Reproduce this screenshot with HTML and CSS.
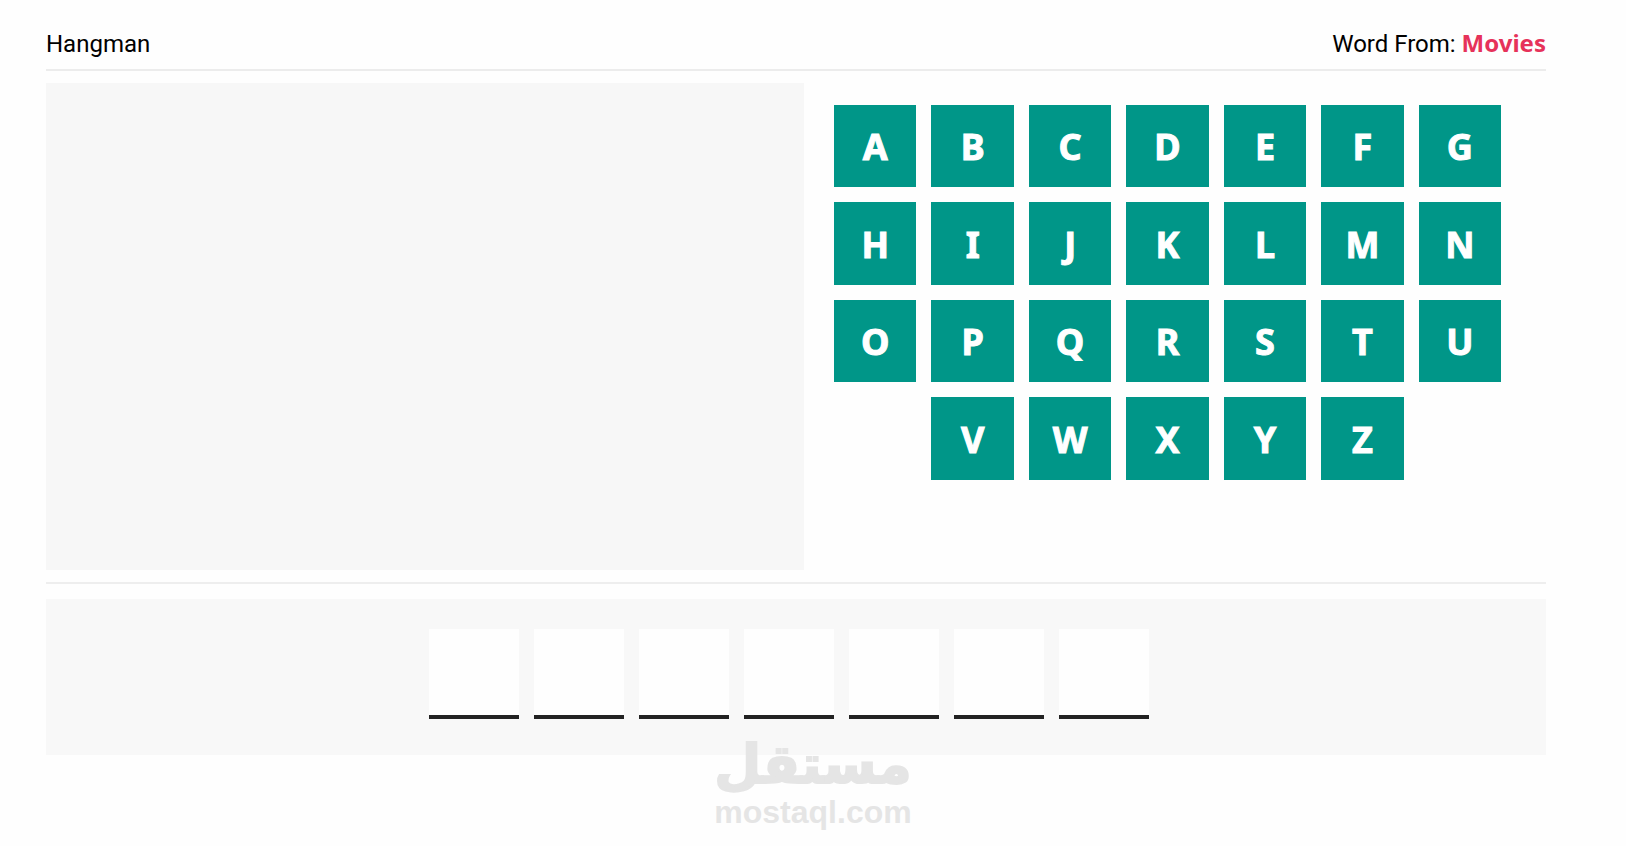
FILE: index.html
```html
<!DOCTYPE html>
<html lang="en">
<head>
  <meta charset="UTF-8" />
  <meta name="viewport" content="width=device-width, initial-scale=1.0" />
  <title>Hangman</title>
  <link rel="stylesheet" href="styles.css">
</head>
<body>
  <div class="container">
    <header class="game-info">
      <div class="game-name">Hangman</div>
      <div class="category">Word From: <span>Movies</span></div>
    </header>

    <main>
      <div class="play-area">
        <div class="hangman-draw"></div>
        <div class="letters">
          <button type="button">A</button>
          <button type="button">B</button>
          <button type="button">C</button>
          <button type="button">D</button>
          <button type="button">E</button>
          <button type="button">F</button>
          <button type="button">G</button>
          <button type="button">H</button>
          <button type="button">I</button>
          <button type="button">J</button>
          <button type="button">K</button>
          <button type="button">L</button>
          <button type="button">M</button>
          <button type="button">N</button>
          <button type="button">O</button>
          <button type="button">P</button>
          <button type="button">Q</button>
          <button type="button">R</button>
          <button type="button">S</button>
          <button type="button">T</button>
          <button type="button">U</button>
          <button type="button" class="last-row">V</button>
          <button type="button">W</button>
          <button type="button">X</button>
          <button type="button">Y</button>
          <button type="button">Z</button>
        </div>
      </div>

      <div class="letters-guess">
        <span></span>
        <span></span>
        <span></span>
        <span></span>
        <span></span>
        <span></span>
        <span></span>
      </div>
    </main>
  </div>

  <div class="watermark">
    <div class="watermark-name" lang="ar" dir="rtl">مستقل</div>
    <div class="watermark-site">mostaql.com</div>
  </div>
</body>
</html>
```

FILE: styles.css
```css
* { box-sizing: border-box; }

body {
  position: relative;
  min-height: 100vh;
  margin: 0;
  background: #fefefe;
  color: #000;
  font-family: Tahoma, Roboto, sans-serif;
  font-size: 24px;
}

.container {
  padding: 28px 80px 0 46px;
}

.game-info {
  display: flex;
  justify-content: space-between;
  align-items: baseline;
  padding-bottom: 10px;
  border-bottom: 2px solid #ececec;
  line-height: 30px;
}
.category span {
  color: #e6325a;
  font-family: Tahoma, "Noto Sans", sans-serif;
  font-weight: bold;
}

.play-area {
  display: flex;
  gap: 30px;
  padding: 12px 0;
  border-bottom: 2px solid #eee;
}
.hangman-draw {
  flex: 758;
  min-height: 487px;
  background: #f7f7f7;
}

.letters {
  flex: 667;
  display: grid;
  grid-template-columns: repeat(7, 1fr);
  gap: 15px;
  align-content: start;
  margin-right: 45px;
  padding-top: 22px;
}
.letters button {
  aspect-ratio: 1;
  padding: 2px 0 0;
  border: none;
  background: #009688;
  color: #fff;
  font-family: Tahoma, "Noto Sans", sans-serif;
  font-size: 36px;
  font-weight: bold;
  line-height: 36px;
  -webkit-text-stroke: 1px #fff;
  cursor: pointer;
}
.letters .last-row { grid-column-start: 2; }

.letters-guess {
  display: flex;
  justify-content: center;
  margin-top: 15px;
  padding: 30px 0 36px;
  background: #f8f8f8;
}
.letters-guess span {
  width: 90px;
  height: 90px;
  margin-right: 15px;
  background: #fefefe;
  border-bottom: 4px solid #222;
}

.watermark {
  position: absolute;
  bottom: 16px;
  left: 0;
  right: 0;
  color: #e5e5e5;
  font-weight: bold;
  text-align: center;
  pointer-events: none;
}
.watermark-name {
  font-family: "DejaVu Sans", sans-serif;
  font-size: 54px;
  line-height: 58px;
  -webkit-text-stroke: 2px #e5e5e5;
}
.watermark-site {
  font-family: "Liberation Sans", Arial, sans-serif;
  font-size: 32px;
  line-height: 36px;
}
```
